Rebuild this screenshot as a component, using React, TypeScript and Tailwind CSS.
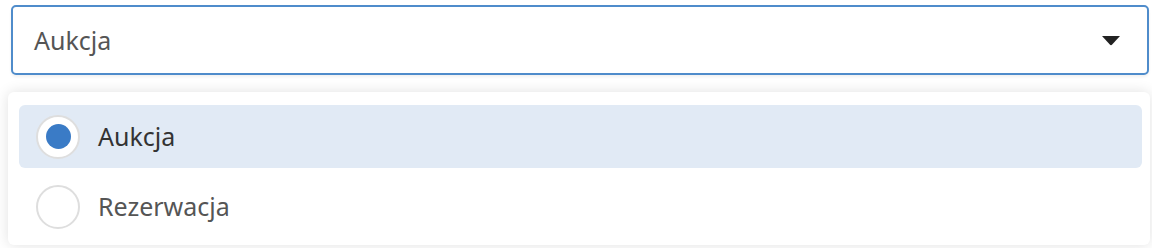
import { useState } from "react";

const options = ["Aukcja", "Rezerwacja"];

function Radio({ checked }: { checked: boolean }) {
  return (
    <span className="flex h-[44px] w-[44px] shrink-0 items-center justify-center rounded-full border-2 border-[#dedede] bg-white">
      {checked && <span className="h-[25px] w-[25px] rounded-full bg-[#3a7bc6]" />}
    </span>
  );
}

export default function App() {
  const [value, setValue] = useState("Aukcja");

  return (
    <div className="h-[248px] w-[1152px] overflow-hidden bg-white font-['Noto_Sans',sans-serif]">
      <div className="pl-[11px] pr-[3px] pt-[5px]">
        <div className="flex h-[70px] items-center justify-between rounded-[5px] border-2 border-[#4f8ccb] bg-white pl-[21px] pr-[26px] shadow-[0_2px_3px_rgba(0,0,0,0.06)]">
          <span className="text-[25px] leading-none text-[#555]">{value}</span>
          <svg width="20" height="11" viewBox="0 0 20 11">
            <path d="M1 1 H19 L11.2 9.6 Q10 10.8 8.8 9.6 Z" fill="#222" />
          </svg>
        </div>
      </div>

      <div className="mt-[17px] ml-[8px] mr-[2px] rounded-[6px] bg-white pt-[13px] pb-[7px] pl-[11px] pr-[8px] shadow-[0_0_14px_rgba(0,0,0,0.12)]">
        <div className="flex flex-col gap-[7px]">
          {options.map((o) => (
            <button
              key={o}
              onClick={() => setValue(o)}
              className={`flex h-[63px] items-center gap-[18px] rounded-[6px] pl-[17px] text-left ${
                o === value ? "bg-[#e1eaf5] text-[#333]" : "text-[#555]"
              }`}
            >
              <Radio checked={o === value} />
              <span className="text-[25px] leading-none">{o}</span>
            </button>
          ))}
        </div>
      </div>
    </div>
  );
}
